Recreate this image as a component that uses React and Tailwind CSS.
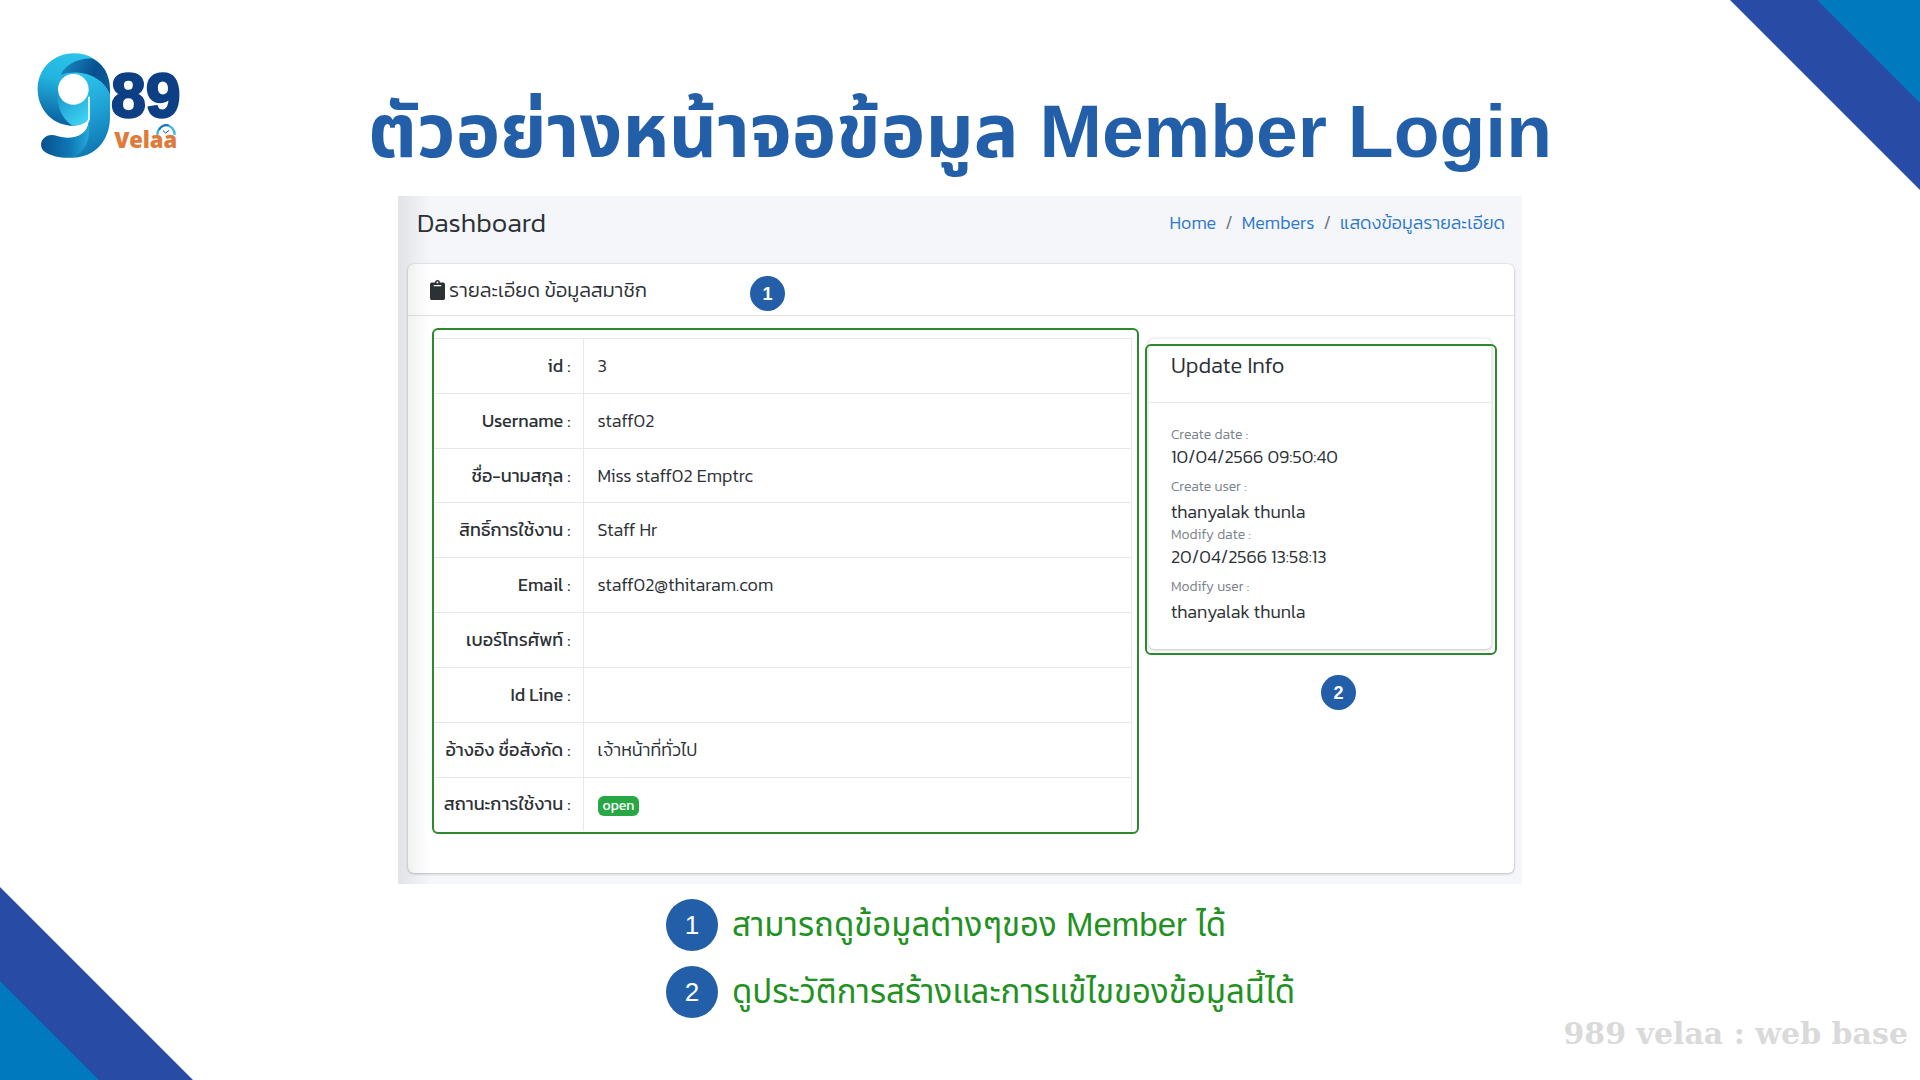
import { FaClipboard } from "react-icons/fa";

const rows = [
  ["id :", "3"],
  ["Username :", "staff02"],
  ["ชื่อ-นามสกุล :", "Miss staff02 Emptrc"],
  ["สิทธิ์การใช้งาน :", "Staff Hr"],
  ["Email :", "staff02@thitaram.com"],
  ["เบอร์โทรศัพท์ :", ""],
  ["Id Line :", ""],
  ["อ้างอิง ชื่อสังกัด :", "เจ้าหน้าที่ทั่วไป"],
  ["สถานะการใช้งาน :", "open"],
];

const history = [
  ["Create date :", "10/04/2566 09:50:40", "Create user :", "thanyalak thunla"],
  ["Modify date :", "20/04/2566 13:58:13", "Modify user :", "thanyalak thunla"],
];

const notes = ["สามารถดูข้อมูลต่างๆของ Member ได้", "ดูประวัติการสร้างและการแข้ไขของข้อมูลนี้ได้"];

function Logo() {
  return (
    <svg viewBox="0 0 540 390" className="h-[130px] w-[180px]" role="img" aria-label="989 Velaa">
      <defs>
        <linearGradient id="bowl" x1="0.6" y1="0" x2="0.4" y2="1">
          <stop offset="0" stopColor="#2cc3e8" />
          <stop offset="0.4" stopColor="#22b4e0" />
          <stop offset="1" stopColor="#0a5f9e" />
        </linearGradient>
        <linearGradient id="lens" x1="0" y1="0" x2="0.8" y2="1">
          <stop offset="0" stopColor="#1690c8" />
          <stop offset="1" stopColor="#3fd6f4" />
        </linearGradient>
        <linearGradient id="fold" x1="0" y1="0.3" x2="1" y2="0.7">
          <stop offset="0" stopColor="#1a86c0" />
          <stop offset="0.6" stopColor="#07508f" />
          <stop offset="1" stopColor="#0b5c9c" />
        </linearGradient>
        <linearGradient id="stem" x1="0.3" y1="0" x2="0.6" y2="1">
          <stop offset="0" stopColor="#2fc9ee" />
          <stop offset="0.5" stopColor="#1fa3d6" />
          <stop offset="1" stopColor="#0f74b0" />
        </linearGradient>
        <linearGradient id="tail" x1="0" y1="0" x2="1" y2="0">
          <stop offset="0" stopColor="#07508f" />
          <stop offset="0.6" stopColor="#0f79b6" />
          <stop offset="1" stopColor="#25a9da" />
        </linearGradient>
      </defs>
      <path d="M206 238C194 252 172 259 150 257C92 252 53 204 53 148C53 86 100 40 162 40C205 40 244 62 262 105L206 150Z" fill="url(#bowl)" />
      <path d="M112 150C108 200 128 240 158 257C178 257 196 250 206 238V148Z" fill="url(#lens)" />
      <path d="M122 104C138 74 172 54 218 56C250 72 270 104 270 148V166C250 112 190 88 122 104Z" fill="url(#fold)" />
      <path d="M122 104C188 84 252 112 270 166V230C270 300 226 352 158 353C190 330 206 290 206 240V148C204 116 168 94 122 104Z" fill="url(#stem)" />
      <path d="M70 296C84 282 98 284 114 289C156 302 204 286 206 242C214 300 196 334 158 353C118 356 76 344 66 326C62 314 62 306 70 296Z" fill="url(#tail)" />
      <circle cx="160" cy="148" r="46" fill="#fff" />
      <path d="M207 170V238C200 256 178 268 150 266" fill="none" stroke="#fff" strokeWidth="5" />
      <text x="273" y="230" fill="#0d3f84" stroke="#0d3f84" strokeWidth="7" strokeLinejoin="round" fontSize="188" className="font-['Liberation_Sans',sans-serif] font-bold">89</text>
      <text x="283" y="324" fill="#e07a3a" fontSize="66" className="font-['Noto_Sans','Open_Sans',sans-serif] font-black">Velaa</text>
      <path d="M412 284A26 28 0 0 1 464 284" fill="none" stroke="#3fb4dc" strokeWidth="7" />
      <path d="M417 270A28 28 0 0 1 446 255" fill="none" stroke="#1b6fae" strokeWidth="5" />
      <path d="M429 272L437 279L447 271" fill="none" stroke="#174f8a" strokeWidth="3" />
    </svg>
  );
}

function Marker({ children, className = "" }) {
  return (
    <span className={`flex size-[35px] items-center justify-center rounded-full bg-[#235fa8] font-['Liberation_Sans',sans-serif] text-lg font-bold text-white ${className}`}>
      {children}
    </span>
  );
}

function MemberTable() {
  return (
    <div className="min-w-0 flex-1 rounded-md border-2 border-[#2b8a2b] pt-2 pr-[5px] pb-px">
      <table className="h-[493px] w-full border-collapse">
        <tbody>
          {rows.map(([label, value]) => (
            <tr key={label} className="border-t border-r border-[#e6e8eb]">
              <th scope="row" className="w-[149px] border-r border-[#e6e8eb] pr-3 text-right font-normal whitespace-nowrap">{label}</th>
              <td className="pl-3.5">
                {value === "open" ? (
                  <span className="inline-block rounded-md bg-[#28a745] px-[5px] text-sm leading-5 font-normal text-white">open</span>
                ) : (
                  value
                )}
              </td>
            </tr>
          ))}
        </tbody>
      </table>
    </div>
  );
}

function UpdateInfo() {
  return (
    <section className="relative rounded-md border-x border-t border-[#eceef0] bg-white shadow-[0_1px_3px_rgba(0,0,0,0.25)]">
      <h3 className="border-b border-[#e6e8eb] px-[22px] pt-[11px] pb-5 text-[22px] leading-8">Update Info</h3>
      <dl className="px-[22px] pt-[22px] pb-6">
        {history.map(([dateLabel, date, userLabel, user]) => (
          <div key={dateLabel}>
            <dt className="text-sm leading-5 text-[#7b838b]">{dateLabel}</dt>
            <dd className="mb-2 leading-6">{date}</dd>
            <dt className="text-sm leading-5 text-[#7b838b]">{userLabel}</dt>
            <dd className="mt-[3px] mb-px leading-6">{user}</dd>
          </div>
        ))}
      </dl>
      <span className="pointer-events-none absolute top-[5px] -right-1.5 -bottom-1.5 -left-1 rounded-md border-2 border-[#2b8a2b]" />
    </section>
  );
}

export default function App() {
  return (
    <main className="relative min-h-screen overflow-hidden bg-white font-['Liberation_Sans','Noto_Sans_Thai',sans-serif]">
      <svg viewBox="0 0 190 190" className="absolute top-0 right-0 size-[190px]" aria-hidden="true">
        <path d="M0 0H190V190Z" fill="#284ba5" />
        <path d="M87 0H190V103Z" fill="#0079be" />
      </svg>
      <svg viewBox="0 0 193 193" className="absolute bottom-0 left-0 size-[193px]" aria-hidden="true">
        <path d="M0 0V193H193Z" fill="#284ba5" />
        <path d="M0 94V193H99Z" fill="#0079be" />
      </svg>

      <header className="grid h-[196px] grid-cols-[1fr_auto_1fr] pt-10 pl-5 pr-5">
        <Logo />
        <h1 className="pt-12 text-[75px] leading-[86px] font-bold whitespace-nowrap text-[#235fa8]">ตัวอย่างหน้าจอข้อมูล Member Login</h1>
      </header>

      <div className="mx-auto w-full max-w-[1124px]">
        <div className="relative bg-[#f4f6f9] px-2 pb-[11px] pl-2.5 font-['Kanit','Noto_Sans_Thai','Noto_Sans',sans-serif] text-lg font-light text-[#2c3136]">
          <div className="flex h-[68px] items-start justify-between pt-[9px] pr-[9px] pl-[9px]">
            <h2 className="text-[27px] leading-9">Dashboard</h2>
            <nav className="flex gap-[9px] leading-9 text-[#6c757d]">
              <a href="#home" className="text-[#2f79c9]">Home</a>
              <span>/</span>
              <a href="#members" className="text-[#2f79c9]">Members</a>
              <span>/</span>
              <a href="#detail" className="text-[#2f79c9]">แสดงข้อมูลรายละเอียด</a>
            </nav>
          </div>

          <section className="relative rounded-md bg-white shadow-[0_0_2px_rgba(0,0,0,0.15),0_1px_3px_rgba(0,0,0,0.2)]">
            <h3 className="flex h-[52px] items-center gap-1 border-b border-[#dfe1e4] pl-[22px] text-xl">
              <FaClipboard className="h-5 w-[15px]" />
              รายละเอียด ข้อมูลสมาชิก
            </h3>
            <Marker className="absolute top-3 left-[342px]">1</Marker>
            <div className="flex items-start gap-[9px] pt-3 pr-[22px] pb-[39px] pl-6">
              <MemberTable />
              <div className="w-[344px] pt-2.5">
                <UpdateInfo />
                <Marker className="mt-[26px] ml-[173px]">2</Marker>
              </div>
            </div>
          </section>
          <div className="pointer-events-none absolute inset-y-0 left-0 w-8 bg-linear-to-r from-black/8 to-transparent" />
        </div>

        <ol className="flex flex-col gap-[15px] pt-[15px] pl-[268px]">
          {notes.map((note, i) => (
            <li key={note} className="flex items-center gap-3.5 text-[33px] leading-[52px] text-[#22911f]">
              <span className="flex size-[52px] shrink-0 items-center justify-center rounded-full bg-[#235fa8] text-[26px] text-white">{i + 1}</span>
              {note}
            </li>
          ))}
        </ol>
      </div>

      <p className="absolute right-3 bottom-7 font-['DejaVu_Serif',serif] text-3xl font-bold text-[#dadada]">989 velaa : web base</p>
    </main>
  );
}
